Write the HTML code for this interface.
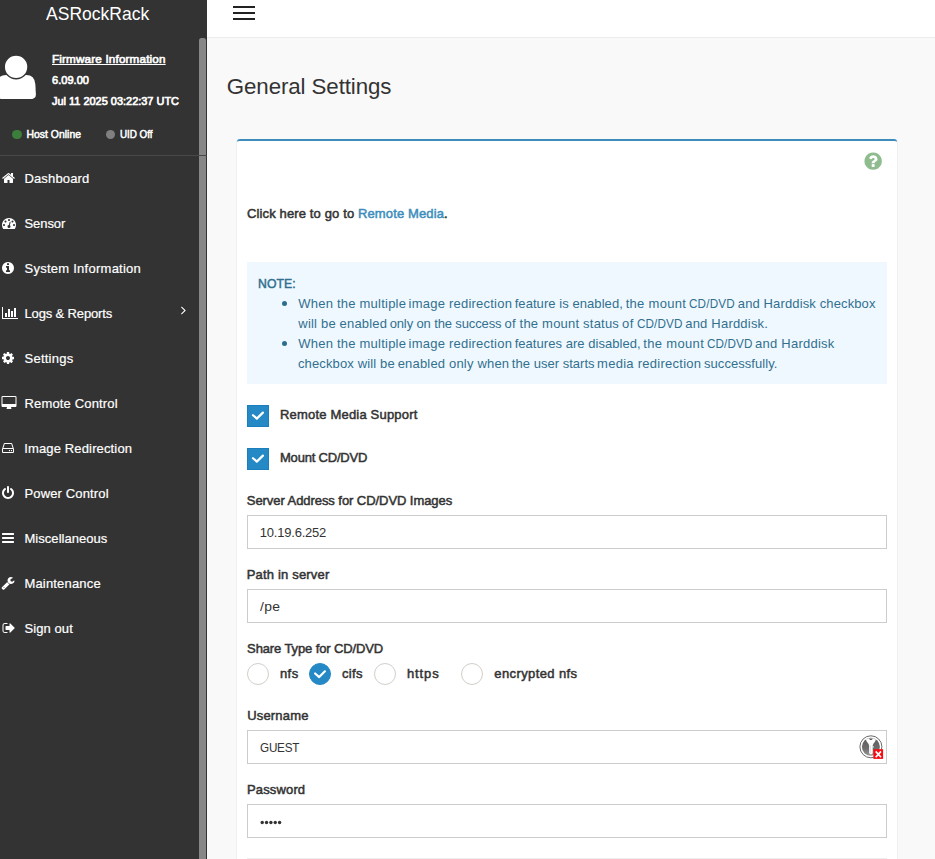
<!DOCTYPE html>
<html lang="en">
<head>
<meta charset="utf-8">
<title>General Settings</title>
<style>
*{box-sizing:border-box;margin:0;padding:0}
html,body{width:935px;height:859px;overflow:hidden;background:#f9f9f9;font-family:"Liberation Sans",sans-serif}
#app{position:relative;width:935px;height:859px;overflow:hidden}
.abs{position:absolute}
.t{position:absolute;white-space:nowrap;transform-origin:0 0;display:block}
#sidebar{left:0;top:0;width:207px;height:859px;background:#333}
#thumb{left:199px;top:38px;width:7px;height:830px;background:rgba(255,255,255,.415);border-radius:2.5px}
#sep{left:0;top:155px;width:207px;height:1px;background:#484848}
#header{left:207px;top:0;width:728px;height:38px;background:#fff;border-bottom:1px solid #ececec}
.bar{left:233px;width:22px;height:2px;background:#222}
#panel{left:237px;top:139px;width:660px;height:760px;background:#fff;border-top:2px solid #3c8dbc;border-radius:3px;box-shadow:-1px 0 0 #f0f0f0,1px 0 0 #f0f0f0}
#note{left:247px;top:262px;width:640px;height:122px;background:#f0f8ff}
.inp{left:247px;width:640px;height:34px;background:#fff;border:1px solid #ccc}
.cb{left:247px;width:22px;height:22px;background:#2489c5;border:1px solid #1c7fbd}
.rd{width:22px;height:22px;border-radius:50%;background:#fff;border:1px solid #d3cfc8}
.rd.on{background:#2489c5;border-color:#2489c5}
.dot{border-radius:50%}
.bul{width:5px;height:5px;border-radius:50%;background:#2d6d8c;left:282px}
svg{position:absolute;overflow:visible}
</style>
</head>
<body>
<div id="app">
<div id="sidebar" class="abs"></div>
<div id="thumb" class="abs"></div>
<div id="sep" class="abs"></div>
<div id="header" class="abs"></div>
<div class="abs bar" style="top:6px"></div>
<div class="abs bar" style="top:12px"></div>
<div class="abs bar" style="top:18px"></div>

<!-- user avatar -->
<svg style="left:-4px;top:55px" width="41" height="45" viewBox="0 0 41 45"><path d="M0.3 39 L0.9 29 Q1.6 19.9 10 19.9 H30.2 Q38.6 19.9 39.3 29 L39.9 39 Q40.2 44.1 33.5 44.1 H6.7 Q0 44.1 0.3 39 Z" fill="#fff"/><circle cx="20.1" cy="11.9" r="11.85" fill="#fff" stroke="#333" stroke-width="1.4"/></svg>
<div class="abs dot" style="left:12px;top:129.5px;width:9.5px;height:9.5px;background:#3c7f3c"></div>
<div class="abs dot" style="left:105.7px;top:129.5px;width:9.5px;height:9.5px;background:#808080"></div>

<div id="panel" class="abs"></div>
<div id="note" class="abs"></div>
<div class="abs bul" style="top:301px"></div>
<div class="abs bul" style="top:341px"></div>

<div class="abs cb" style="top:405px"></div>
<div class="abs cb" style="top:448px"></div>
<svg style="left:247px;top:405px" width="22" height="22" viewBox="0 0 22 22"><path d="M6 10.2 L9.8 13.6 L15.9 7.6" fill="none" stroke="#fff" stroke-width="2.2" stroke-linecap="round" stroke-linejoin="round"/></svg>
<svg style="left:247px;top:448px" width="22" height="22" viewBox="0 0 22 22"><path d="M6 10.2 L9.8 13.6 L15.9 7.6" fill="none" stroke="#fff" stroke-width="2.2" stroke-linecap="round" stroke-linejoin="round"/></svg>

<div class="abs inp" style="top:515px"></div>
<div class="abs inp" style="top:589px"></div>
<div class="abs inp" style="top:730px"></div>
<div class="abs inp" style="top:804px"></div>
<div class="abs" style="left:247px;top:858px;width:640px;height:1px;background:#eee"></div>

<div class="abs rd" style="left:247px;top:663px"></div>
<div class="abs rd on" style="left:309px;top:663px"></div>
<div class="abs rd" style="left:374px;top:663px"></div>
<div class="abs rd" style="left:461px;top:663px"></div>
<svg style="left:309px;top:663px" width="22" height="22" viewBox="0 0 22 22"><path d="M6.1 10.5 L10.2 14.1 L15.9 8.3" fill="none" stroke="#fff" stroke-width="2.2" stroke-linecap="round" stroke-linejoin="round"/></svg>

<!-- password dots -->
<svg style="left:260px;top:820px" width="24" height="6" viewBox="0 0 24 6"><g fill="#333"><circle cx="2.2" cy="2.5" r="1.7"/><circle cx="6.55" cy="2.5" r="1.7"/><circle cx="10.9" cy="2.5" r="1.7"/><circle cx="15.25" cy="2.5" r="1.7"/><circle cx="19.6" cy="2.5" r="1.7"/></g></svg>

<svg style="left:2.00px;top:171.01px" width="14" height="14" viewBox="0 0 1792 1792"><path fill="#fff" d="M1408 992v480q0 26-19 45t-45 19h-384v-384h-256v384h-384q-26 0-45-19t-19-45v-480q0-1 .5-3t.5-3l575-474 575 474q1 2 1 6zm223-69l-62 74q-8 9-21 11h-3q-13 0-21-7l-692-577-692 577q-12 8-24 7-13-2-21-11l-62-74q-8-10-7-23.500t11-21.500l719-599q32-26 76-26t76 26l244 204v-195q0-14 9-23t23-9h192q14 0 23 9t9 23v408l219 182q10 8 11 21.500t-7 23.500z"/></svg>
<svg style="left:2.10px;top:215.90px" width="14" height="14" viewBox="0 0 1792 1792"><path fill="#fff" d="M384 1152q0-53-37.500-90.500t-90.500-37.500-90.500 37.500-37.500 90.500 37.500 90.500 90.500 37.500 90.500-37.500 37.500-90.500zm192-448q0-53-37.500-90.500t-90.500-37.500-90.500 37.500-37.500 90.500 37.500 90.500 90.500 37.500 90.500-37.500 37.500-90.500zm428 481l101-382q6-26-7.500-48.500t-38.500-29.500-48 6.500-30 39.500l-101 382q-60 5-107 43.500t-63 98.500q-20 77 20 146t117 89 146-20 89-117q16-60-6-117t-72-91zm660-33q0-53-37.500-90.500t-90.500-37.500-90.500 37.500-37.500 90.500 37.500 90.500 90.500 37.500 90.500-37.500 37.500-90.500zm-640-640q0-53-37.500-90.500t-90.500-37.500-90.500 37.500-37.500 90.500 37.500 90.500 90.500 37.500 90.500-37.500 37.500-90.500zm448 192q0-53-37.500-90.500t-90.500-37.500-90.500 37.500-37.500 90.500 37.500 90.500 90.500 37.500 90.500-37.500 37.500-90.500zm320 448q0 261-141 483-19 29-54 29h-1402q-35 0-54-29-141-221-141-483 0-182 71-348t191-286 286-191 348-71 348 71 286 191 191 286 71 348z"/></svg>
<svg style="left:1.15px;top:260.95px" width="14" height="14" viewBox="0 0 1792 1792"><path fill="#fff" d="M1152 1376v-160q0-14-9-23t-23-9h-96v-512q0-14-9-23t-23-9h-320q-14 0-23 9t-9 23v160q0 14 9 23t23 9h96v320h-96q-14 0-23 9t-9 23v160q0 14 9 23t23 9h448q14 0 23-9t9-23zm-128-896v-160q0-14-9-23t-23-9h-192q-14 0-23 9t-9 23v160q0 14 9 23t23 9h192q14 0 23-9t9-23zm640 416q0 209-103 385.500t-279.500 279.500-385.500 103-385.500-103-279.500-279.500-103-385.500 103-385.500 279.500-279.500 385.500-103 385.500 103 279.500 279.500 103 385.500z"/></svg>
<svg style="left:1.75px;top:306.15px" width="14" height="14" viewBox="0 0 1792 1792"><path fill="#fff" d="M640 896v512h-256v-512h256zm384-512v1024h-256v-1024h256zm1024 1152v128h-2048v-1536h128v1408h1920zm-640-896v768h-256v-768h256zm384-384v1152h-256v-1152h256z"/></svg>
<svg style="left:0.95px;top:350.95px" width="14" height="14" viewBox="0 0 1792 1792"><path fill="#fff" d="M1152 896q0-106-75-181t-181-75-181 75-75 181 75 181 181 75 181-75 75-181zm512-109v222q0 12-8 23t-20 13l-185 28q-19 54-39 91 35 50 107 138 10 12 10 25t-9 23q-27 37-99 108t-94 71q-12 0-26-9l-138-108q-44 23-91 38-16 136-29 186-7 28-36 28h-222q-14 0-24.500-8.500t-11.500-21.500l-28-184q-49-16-90-37l-141 107q-10 9-25 9-14 0-25-11-126-114-165-168-7-10-7-23 0-12 8-23 15-21 51-66.500t54-70.500q-27-50-41-99l-183-27q-13-2-21-12.500t-8-23.500v-222q0-12 8-23t19-13l186-28q14-46 39-92-40-57-107-138-10-12-10-24 0-10 9-23 26-36 98.500-107.500t94.500-71.500q13 0 26 10l138 107q44-23 91-38 16-136 29-186 7-28 36-28h222q14 0 24.500 8.500t11.500 21.500l28 184q49 16 90 37l142-107q9-9 24-9 13 0 25 10 129 119 165 170 7 8 7 22 0 12-8 23-15 21-51 66.500t-54 70.500q26 50 41 98l183 28q13 2 21 12.500t8 23.500z"/></svg>
<svg style="left:2.40px;top:395.90px" width="14" height="14" viewBox="0 0 1792 1792"><path fill="#fff" d="M1728 992v-832q0-13-9.500-22.500t-22.500-9.500h-1600q-13 0-22.500 9.500t-9.500 22.500v832q0 13 9.500 22.500t22.500 9.500h1600q13 0 22.500-9.500t9.500-22.500zm128-832v1088q0 66-47 113t-113 47h-544q0 37 16 77.500t32 71 16 43.500q0 26-19 45t-45 19h-512q-26 0-45-19t-19-45q0-14 16-44t32-70 16-78h-544q-66 0-113-47t-47-113v-1088q0-66 47-113t113-47h1600q66 0 113 47t47 113z"/></svg>
<svg style="left:2.25px;top:440.95px" width="14" height="14" viewBox="0 0 1792 1792"><path fill="#fff" d="M1040 1216q0 33-23.500 56.500t-56.500 23.500-56.500-23.500-23.500-56.500 23.500-56.500 56.500-23.500 56.500 23.500 23.500 56.500zm256 0q0 33-23.500 56.500t-56.500 23.500-56.500-23.500-23.500-56.500 23.500-56.500 56.500-23.500 56.500 23.500 23.500 56.500zm112 160v-320q0-13-9.500-22.500t-22.500-9.500h-1216q-13 0-22.500 9.500t-9.500 22.500v320q0 13 9.500 22.500t22.500 9.500h1216q13 0 22.500-9.500t9.500-22.500zm-1230-480h1180l-157-482q-4-13-16-21.500t-26-8.500h-782q-14 0-26 8.500t-16 21.500zm1358 160v320q0 66-47 113t-113 47h-1216q-66 0-113-47t-47-113v-320q0-25 16-75l197-606q17-53 63-86t101-33h782q55 0 101 33t63 86l197 606q16 50 16 75z"/></svg>
<svg style="left:1.25px;top:486.10px" width="14" height="14" viewBox="0 0 1792 1792"><path fill="#fff" d="M1664 896q0 156-61 298t-164 245-245 164-298 61-298-61-245-164-164-245-61-298q0-182 80.500-343t226.500-270q43-32 95.500-25t83.500 50q32 42 24.500 94.500t-49.500 84.500q-98 74-151.500 181t-53.500 228q0 104 40.500 198.500t109.500 163.500 163.500 109.500 198.500 40.500 198.500-40.500 163.500-109.500 109.500-163.500 40.500-198.500q0-121-53.500-228t-151.500-181q-42-32-49.500-84.500t24.500-94.500q31-43 84-50t95 25q146 109 226.500 270t80.500 343zm-640-768v640q0 52-38 90t-90 38-90-38-38-90v-640q0-52 38-90t90-38 90 38 38 90z"/></svg>
<svg style="left:1.25px;top:531.20px" width="14" height="14" viewBox="0 0 1792 1792"><path fill="#fff" d="M1664 1344v128q0 26-19 45t-45 19h-1408q-26 0-45-19t-19-45v-128q0-26 19-45t45-19h1408q26 0 45 19t19 45zm0-512v128q0 26-19 45t-45 19h-1408q-26 0-45-19t-19-45v-128q0-26 19-45t45-19h1408q26 0 45 19t19 45zm0-512v128q0 26-19 45t-45 19h-1408q-26 0-45-19t-19-45v-128q0-26 19-45t45-19h1408q26 0 45 19t19 45z"/></svg>
<svg style="left:1.38px;top:575.88px" width="14" height="14" viewBox="0 0 1792 1792"><path fill="#fff" d="M448 1472q0-26-19-45t-45-19-45 19-19 45 19 45 45 19 45-19 19-45zm644-420l-682 682q-37 37-90 37-52 0-91-37l-106-108q-38-36-38-90 0-53 38-91l681-681q39 98 114.500 173.500t173.500 114.500zm634-435q0 39-23 106-47 134-164.500 217.500t-258.500 83.500q-185 0-316.500-131.500t-131.500-316.500 131.500-316.500 316.500-131.500q58 0 121.500 16.500t107.500 46.500q16 11 16 28t-16 28l-293 169v224l193 107q5-3 79-48.500t135.500-81 70.500-35.500q15 0 23.500 10t8.500 25z"/></svg>
<svg style="left:1.62px;top:621.00px" width="14" height="14" viewBox="0 0 1792 1792"><path fill="#fff" d="M704 1440q0 4 1 20t.5 26.500-3 23.500-10 19.500-20.500 6.500h-320q-119 0-203.500-84.500t-84.500-203.500v-704q0-119 84.500-203.500t203.500-84.500h320q13 0 22.500 9.500t9.500 22.500q0 4 1 20t.5 26.500-3 23.500-10 19.500-20.500 6.500h-320q-66 0-113 47t-47 113v704q0 66 47 113t113 47h312l11.500 1 11.500 3 8 5.500 7 9 2 13.500zm928-544q0 26-19 45l-544 544q-19 19-45 19t-45-19-19-45v-288h-448q-26 0-45-19t-19-45v-384q0-26 19-45t45-19h448v-288q0-26 19-45t45-19 45 19l544 544q19 19 19 45z"/></svg>
<svg style="left:180.93px;top:302.95px" width="14" height="14" viewBox="0 0 1792 1792"><path fill="#fff" d="M595 960q0 13-10 23l-466 466q-10 10-23 10t-23-10l-50-50q-10-10-10-23t10-23l393-393-393-393q-10-10-10-23t10-23l50-50q10-10 23-10t23 10l466 466q10 10 10 23z"/></svg>
<svg style="left:863.15px;top:150.65px" width="20.3" height="20.3" viewBox="0 0 1792 1792"><path fill="#8fbc8f" d="M1024 1376v-192q0-14-9-23t-23-9h-192q-14 0-23 9t-9 23v192q0 14 9 23t23 9h192q14 0 23-9t9-23zm256-672q0-88-55.500-163t-138.500-116-170-41q-243 0-371 213-15 24 8 42l132 100q7 6 19 6 16 0 25-12 53-68 86-92 34-24 86-24 48 0 85.500 26t37.500 59q0 38-20 61t-68 45q-63 28-115.500 86.500t-52.500 125.500v36q0 14 9 23t23 9h192q14 0 23-9t9-23q0-19 21.500-49.500t54.500-49.500q32-18 49-28.500t46-35 44.500-48 28-60.500 12.500-81zm384 192q0 209-103 385.500t-279.500 279.500-385.500 103-385.500-103-279.500-279.500-103-385.500 103-385.500 279.500-279.500 385.500-103 385.500 103 279.500 279.500 103 385.500z"/></svg><svg style="left:859px;top:735px" width="25" height="25" viewBox="0 0 25 25">
<defs><linearGradient id="kg" x1="0" y1="0" x2="0" y2="1"><stop offset="0" stop-color="#5c5c5c"/><stop offset="0.6" stop-color="#6e6e6e"/><stop offset="1" stop-color="#9a9a9a"/></linearGradient></defs>
<circle cx="11.9" cy="11.8" r="11" fill="#fff" stroke="#6a6a6a" stroke-width="1"/>
<circle cx="11.9" cy="11.8" r="9" fill="url(#kg)"/>
<path d="M6.9 4.4 Q11.9 1.6 16.9 4.4 C16.2 7.4 14 8.2 13.7 10.4 V18.3 Q11.9 20.6 10.1 18.3 V10.4 C9.8 8.2 7.6 7.4 6.9 4.4 Z" fill="#fff"/>
<path d="M9.9 3.5 H13.9 Q12.9 5 11.9 5 Q10.9 5 9.9 3.5 Z" fill="#4a4a4a"/>
<path d="M11.4 10.5 V18.2" stroke="#dcdcdc" stroke-width="0.9" fill="none"/>
<path d="M13.7 11.3 h1 v1.2 h-1 Z" fill="#fff"/>
<rect x="14.4" y="14.2" width="9.7" height="9.7" fill="#fa0a10"/>
<path d="M16.7 16.4 L22 22.3 M22 16.4 L16.7 22.3" stroke="#fff" stroke-width="1.7" fill="none"/>
</svg>

<span class="t e" style="left:45.62px;top:-1.50px;font-size:18.6px;line-height:30px;font-weight:400;color:#fff;letter-spacing:0.038px;transform:scaleX(0.94);">ASRockRack</span>
<span class="t o" style="left:52.00px;top:49.00px;font-size:11.7px;line-height:19px;font-weight:400;-webkit-text-stroke:0.65px;color:#fff;text-decoration:underline;letter-spacing:0.162px;">Firmware Information</span>
<span class="t e" style="left:52.01px;top:71.25px;font-size:11.5px;line-height:18px;font-weight:400;-webkit-text-stroke:0.7px;color:#fff;letter-spacing:0.029px;transform:scaleX(0.96);">6.09.00</span>
<span class="t o" style="left:51.81px;top:92.00px;font-size:11.5px;line-height:18px;font-weight:400;-webkit-text-stroke:0.7px;color:#fff;letter-spacing:0.010px;transform:scaleX(0.95);">Jul 11 2025 03:22:37 UTC</span>
<span class="t e" style="left:26.56px;top:126.00px;font-size:10.4px;line-height:17px;font-weight:400;-webkit-text-stroke:0.5px;color:#fff;letter-spacing:0.013px;">Host Online</span>
<span class="t o" style="left:119.97px;top:126.00px;font-size:10.4px;line-height:17px;font-weight:400;-webkit-text-stroke:0.5px;color:#fff;letter-spacing:-0.055px;transform:scaleX(0.95);">UID Off</span>
<span class="t e" style="left:24.45px;top:168.00px;font-size:13px;line-height:21px;font-weight:400;-webkit-text-stroke:0.2px;color:#fff;letter-spacing:0.159px;">Dashboard</span>
<span class="t o" style="left:24.53px;top:213.00px;font-size:13px;line-height:21px;font-weight:400;-webkit-text-stroke:0.2px;color:#fff;letter-spacing:-0.069px;">Sensor</span>
<span class="t e" style="left:24.53px;top:258.00px;font-size:13px;line-height:21px;font-weight:400;-webkit-text-stroke:0.2px;color:#fff;letter-spacing:0.255px;">System Information</span>
<span class="t o" style="left:24.47px;top:303.00px;font-size:13px;line-height:21px;font-weight:400;-webkit-text-stroke:0.2px;color:#fff;letter-spacing:-0.143px;">Logs &amp; Reports</span>
<span class="t e" style="left:24.53px;top:348.00px;font-size:13px;line-height:21px;font-weight:400;-webkit-text-stroke:0.2px;color:#fff;letter-spacing:0.241px;">Settings</span>
<span class="t o" style="left:24.46px;top:393.00px;font-size:13px;line-height:21px;font-weight:400;-webkit-text-stroke:0.2px;color:#fff;letter-spacing:0.159px;">Remote Control</span>
<span class="t e" style="left:24.25px;top:438.00px;font-size:13px;line-height:21px;font-weight:400;-webkit-text-stroke:0.2px;color:#fff;letter-spacing:0.140px;">Image Redirection</span>
<span class="t o" style="left:24.46px;top:483.00px;font-size:13px;line-height:21px;font-weight:400;-webkit-text-stroke:0.2px;color:#fff;letter-spacing:0.148px;">Power Control</span>
<span class="t e" style="left:24.47px;top:528.00px;font-size:13px;line-height:21px;font-weight:400;-webkit-text-stroke:0.2px;color:#fff;letter-spacing:0.044px;">Miscellaneous</span>
<span class="t o" style="left:24.47px;top:573.00px;font-size:13px;line-height:21px;font-weight:400;-webkit-text-stroke:0.2px;color:#fff;letter-spacing:0.171px;">Maintenance</span>
<span class="t e" style="left:24.53px;top:618.00px;font-size:13px;line-height:21px;font-weight:400;-webkit-text-stroke:0.2px;color:#fff;letter-spacing:0.078px;">Sign out</span>
<span class="t o" style="left:226.78px;top:69.10px;font-size:22.3px;line-height:36px;font-weight:400;color:#333;letter-spacing:-0.091px;">General Settings</span>
<span class="t e" style="left:247.06px;top:203.25px;font-size:13px;line-height:21px;font-weight:400;-webkit-text-stroke:0.5px;color:#333;letter-spacing:0.128px;">Click here to go to <span style="color:#3c8dbc">Remote Media</span>.</span>
<span class="t o" style="left:258.12px;top:273.20px;font-size:13px;line-height:21px;font-weight:400;-webkit-text-stroke:0.5px;color:#31708f;letter-spacing:0.106px;transform:scaleX(0.94);">NOTE:</span>
<span class="t e" style="left:298.27px;top:292.90px;font-size:13px;line-height:21px;font-weight:400;color:#31708f;letter-spacing:0.227px;">When the multiple</span>
<span class="t o" style="left:408.60px;top:292.90px;font-size:13px;line-height:21px;font-weight:400;color:#31708f;letter-spacing:0.226px;">image redirection</span>
<span class="t e" style="left:514.68px;top:292.90px;font-size:13px;line-height:21px;font-weight:400;color:#31708f;letter-spacing:0.064px;">feature is enabled,</span>
<span class="t o" style="left:625.67px;top:292.90px;font-size:13px;line-height:21px;font-weight:400;color:#31708f;letter-spacing:0.294px;">the mount</span>
<span class="t e" style="left:689.01px;top:292.90px;font-size:13px;line-height:21px;font-weight:400;color:#31708f;letter-spacing:0.183px;transform:scaleX(0.9);">CD/DVD</span>
<span class="t o" style="left:737.79px;top:292.90px;font-size:13px;line-height:21px;font-weight:400;color:#31708f;letter-spacing:0.128px;">and Harddisk checkbox</span>
<span class="t e" style="left:298.37px;top:312.60px;font-size:13px;line-height:21px;font-weight:400;color:#31708f;letter-spacing:0.187px;">will be enabled</span>
<span class="t o" style="left:389.66px;top:312.60px;font-size:13px;line-height:21px;font-weight:400;color:#31708f;letter-spacing:-0.126px;">only on the success</span>
<span class="t e" style="left:504.51px;top:312.60px;font-size:13px;line-height:21px;font-weight:400;color:#31708f;letter-spacing:0.210px;">of the mount status</span>
<span class="t o" style="left:621.90px;top:312.60px;font-size:13px;line-height:21px;font-weight:400;color:#31708f;letter-spacing:0.574px;">of</span>
<span class="t e" style="left:636.61px;top:312.60px;font-size:13px;line-height:21px;font-weight:400;color:#31708f;letter-spacing:0.106px;transform:scaleX(0.9);">CD/DVD</span>
<span class="t o" style="left:685.22px;top:312.60px;font-size:13px;line-height:21px;font-weight:400;color:#31708f;letter-spacing:0.208px;">and Harddisk.</span>
<span class="t e" style="left:298.27px;top:332.60px;font-size:13px;line-height:21px;font-weight:400;color:#31708f;letter-spacing:0.227px;">When the multiple</span>
<span class="t o" style="left:408.60px;top:332.60px;font-size:13px;line-height:21px;font-weight:400;color:#31708f;letter-spacing:0.226px;">image redirection</span>
<span class="t e" style="left:514.68px;top:332.60px;font-size:13px;line-height:21px;font-weight:400;color:#31708f;letter-spacing:0.042px;">features are disabled,</span>
<span class="t o" style="left:643.25px;top:332.60px;font-size:13px;line-height:21px;font-weight:400;color:#31708f;letter-spacing:0.338px;">the mount</span>
<span class="t e" style="left:706.81px;top:332.60px;font-size:13px;line-height:21px;font-weight:400;color:#31708f;letter-spacing:0.106px;transform:scaleX(0.9);">CD/DVD</span>
<span class="t o" style="left:755.09px;top:332.60px;font-size:13px;line-height:21px;font-weight:400;color:#31708f;letter-spacing:0.236px;">and Harddisk</span>
<span class="t e" style="left:297.90px;top:352.60px;font-size:13px;line-height:21px;font-weight:400;color:#31708f;letter-spacing:0.142px;">checkbox will be</span>
<span class="t o" style="left:397.68px;top:352.60px;font-size:13px;line-height:21px;font-weight:400;color:#31708f;letter-spacing:0.185px;">enabled only when</span>
<span class="t e" style="left:511.86px;top:352.60px;font-size:13px;line-height:21px;font-weight:400;color:#31708f;letter-spacing:0.022px;">the user starts</span>
<span class="t o" style="left:597.11px;top:352.60px;font-size:13px;line-height:21px;font-weight:400;color:#31708f;letter-spacing:0.266px;">media redirection</span>
<span class="t e" style="left:703.99px;top:352.60px;font-size:13px;line-height:21px;font-weight:400;color:#31708f;letter-spacing:0.061px;">successfully.</span>
<span class="t o" style="left:279.97px;top:404.25px;font-size:13px;line-height:21px;font-weight:400;-webkit-text-stroke:0.5px;color:#333;letter-spacing:0.191px;">Remote Media Support</span>
<span class="t e" style="left:279.97px;top:447.00px;font-size:13px;line-height:21px;font-weight:400;-webkit-text-stroke:0.5px;color:#333;letter-spacing:-0.194px;">Mount CD/DVD</span>
<span class="t o" style="left:246.84px;top:490.00px;font-size:13px;line-height:21px;font-weight:400;-webkit-text-stroke:0.5px;color:#333;letter-spacing:-0.065px;">Server Address for CD/DVD Images</span>
<span class="t e" style="left:259.83px;top:522.00px;font-size:13px;line-height:21px;font-weight:400;color:#333;letter-spacing:-0.217px;">10.19.6.252</span>
<span class="t o" style="left:246.77px;top:564.00px;font-size:13px;line-height:21px;font-weight:400;-webkit-text-stroke:0.5px;color:#333;letter-spacing:0.178px;">Path in server</span>
<span class="t e" style="left:259.67px;top:596.00px;font-size:13px;line-height:21px;font-weight:400;color:#333;letter-spacing:0.314px;transform:scaleX(1.07);">/pe</span>
<span class="t o" style="left:247.09px;top:638.00px;font-size:13px;line-height:21px;font-weight:400;-webkit-text-stroke:0.5px;color:#333;letter-spacing:-0.115px;">Share Type for CD/DVD</span>
<span class="t e" style="left:279.89px;top:663.00px;font-size:13px;line-height:21px;font-weight:400;-webkit-text-stroke:0.5px;color:#333;letter-spacing:0.515px;">nfs</span>
<span class="t o" style="left:341.93px;top:663.00px;font-size:13px;line-height:21px;font-weight:400;-webkit-text-stroke:0.5px;color:#333;letter-spacing:0.372px;">cifs</span>
<span class="t e" style="left:406.97px;top:663.00px;font-size:13px;line-height:21px;font-weight:400;-webkit-text-stroke:0.5px;color:#333;letter-spacing:0.894px;">https</span>
<span class="t o" style="left:494.32px;top:663.00px;font-size:13px;line-height:21px;font-weight:400;-webkit-text-stroke:0.5px;color:#333;letter-spacing:0.391px;">encrypted nfs</span>
<span class="t e" style="left:247.14px;top:705.00px;font-size:13px;line-height:21px;font-weight:400;-webkit-text-stroke:0.5px;color:#333;letter-spacing:0.186px;">Username</span>
<span class="t o" style="left:259.96px;top:737.00px;font-size:13px;line-height:21px;font-weight:400;color:#333;letter-spacing:-0.245px;transform:scaleX(0.9);">GUEST</span>
<span class="t e" style="left:247.01px;top:779.00px;font-size:13px;line-height:21px;font-weight:400;-webkit-text-stroke:0.5px;color:#333;letter-spacing:0.145px;">Password</span>
</div>
</body>
</html>
